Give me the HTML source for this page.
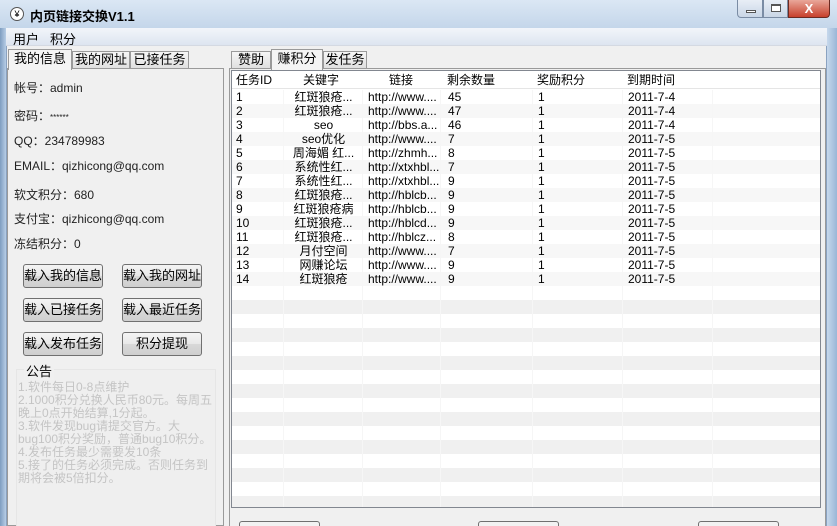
<!DOCTYPE html>
<html><head><meta charset="utf-8"><style>
*{margin:0;padding:0;box-sizing:border-box}
html,body{width:837px;height:526px;overflow:hidden}
body{background:#a9c4e0;font-family:"Liberation Sans","Noto Sans CJK SC",sans-serif;font-size:12px;color:#000;position:relative}
.abs{position:absolute}
#title{left:0;top:0;width:837px;height:28px;background:linear-gradient(#dbe7f4,#c4d6ea);}
#client{left:6px;top:28px;width:821px;height:498px;background:#f0f0f0;border-left:1px solid #8aa2c0;border-right:1px solid #8aa2c0}
#menu{left:6px;top:28px;width:821px;height:18px;background:linear-gradient(#f2f5fa,#dde5f0);border-bottom:1px solid #d4d9e2}
.tab{position:absolute;height:19px;border:1px solid #9a9a9a;border-bottom:none;background:linear-gradient(#f6f6f6,#e0e0e0);font-size:13px;line-height:17px;padding:0;text-align:center;white-space:nowrap;overflow:hidden}
.tab.sel{background:#f4f4f4;height:21px;z-index:2}
.panel{position:absolute;border:1px solid #9a9a9a;background:#f0f0f0}
.lbl{position:absolute;left:6px;font-size:12px;color:#222;white-space:nowrap}
.btn{position:absolute;width:80px;height:24px;border:1px solid #707070;border-radius:3px;background:linear-gradient(#f4f4f4 0%,#e8e8e8 50%,#d8d8d8 51%,#cfcfcf 100%);text-align:center;line-height:22px;font-size:13px;white-space:nowrap}
.row{position:absolute;left:0;width:589px;height:14px;font-size:12px;line-height:14px}
.row span{position:absolute;white-space:nowrap}
.vl{position:absolute;top:0;width:1px;background:#f6f6f6}
</style></head><body>
<div class="abs" id="title">
 <div class="abs" style="left:10px;top:7px;width:14px;height:14px;border-radius:50%;border:1px solid #555;background:#fff;font-size:9px;line-height:12px;text-align:center">¥</div>
 <div class="abs" style="left:30px;top:6px;font-weight:bold;font-size:13px">内页链接交换V1.1</div>
 <div class="abs" style="left:737px;top:0;width:26px;height:18px;border:1px solid #7a8ca4;border-top:none;border-radius:0 0 0 4px;background:linear-gradient(#e8eef6,#c9d6e6)"><div class="abs" style="left:8px;top:10px;width:10px;height:3px;background:#fff;border:1px solid #555"></div></div>
 <div class="abs" style="left:763px;top:0;width:25px;height:18px;border:1px solid #7a8ca4;border-top:none;background:linear-gradient(#e8eef6,#c9d6e6)"><div class="abs" style="left:7px;top:4px;width:10px;height:8px;border:1px solid #555;border-top-width:2px;background:#fff"></div></div>
 <div class="abs" style="left:788px;top:0;width:42px;height:18px;border:1px solid #6b2a22;border-top:none;border-radius:0 0 4px 0;background:linear-gradient(#e9a79a,#c7402c);color:#fff;font-weight:bold;text-align:center;line-height:17px;font-size:13px">X</div>
</div>
<div class="abs" id="client"></div>
<div class="abs" id="menu"><span class="abs" style="left:7px;top:1px;font-size:13px">用户</span><span class="abs" style="left:44px;top:1px;font-size:13px">积分</span></div>

<div class="tab sel" style="left:8px;top:49px;width:64px">我的信息</div>
<div class="tab" style="left:72px;top:51px;width:58px;height:17px;line-height:15px">我的网址</div>
<div class="tab" style="left:130px;top:51px;width:59px;height:17px;line-height:15px">已接任务</div>
<div class="panel" style="left:7px;top:68px;width:217px;height:458px">
 <div class="lbl" style="top:10px">帐号：admin</div>
 <div class="lbl" style="top:38px">密码：<span style="font-size:8px">******</span></div>
 <div class="lbl" style="top:63px">QQ：234789983</div>
 <div class="lbl" style="top:88px">EMAIL：qizhicong@qq.com</div>
 <div class="lbl" style="top:117px">软文积分：680</div>
 <div class="lbl" style="top:141px">支付宝：qizhicong@qq.com</div>
 <div class="lbl" style="top:166px">冻结积分：0</div>
 <div class="btn" style="left:15px;top:195px">载入我的信息</div>
 <div class="btn" style="left:114px;top:195px">载入我的网址</div>
 <div class="btn" style="left:15px;top:229px">载入已接任务</div>
 <div class="btn" style="left:114px;top:229px">载入最近任务</div>
 <div class="btn" style="left:15px;top:263px">载入发布任务</div>
 <div class="btn" style="left:114px;top:263px">积分提现</div>
 <div class="abs" style="left:8px;top:300px;width:200px;height:160px;border:1px solid #e6e6e6;background:#efefef"></div>
 <div class="abs" style="left:16px;top:292px;font-size:13px;background:#f0f0f0;padding:0 2px">公告</div>
 <div class="abs" style="left:10px;top:312px;width:200px;font-size:12px;line-height:13px;color:#c4c4c4">1.软件每日0-8点维护<br>2.1000积分兑换人民币80元。每周五晚上0点开始结算,1分起。<br>3.软件发现bug请提交官方。大bug100积分奖励，普通bug10积分。<br>4.发布任务最少需要发10条<br>5.接了的任务必须完成。否则任务到期将会被5倍扣分。</div>
</div>

<div class="tab" style="left:231px;top:51px;width:40px;height:17px;line-height:15px">赞助</div>
<div class="tab sel" style="left:271px;top:49px;width:52px">赚积分</div>
<div class="tab" style="left:323px;top:51px;width:44px;height:17px;line-height:15px">发任务</div>
<div class="panel" style="left:229px;top:68px;width:597px;height:458px"></div>
<div class="abs" style="left:231px;top:70px;width:590px;height:438px;background:#fff;border:1px solid #828790;overflow:hidden">
 <div class="abs" style="left:0;top:0;width:590px;height:18px;background:#fff;border-bottom:1px solid #e5e5e5"></div>
 <div class="row" style="top:2px;height:16px"><span style="left:4px">任务ID</span><span style="left:71px">关键字</span><span style="left:157px">链接</span><span style="left:215px">剩余数量</span><span style="left:305px">奖励积分</span><span style="left:395px">到期时间</span></div>
 <div id="rows"></div>
</div>
<div class="abs" style="left:230px;top:509px;width:595px;height:17px;background:#f0f0f0"></div>
<div class="abs" style="left:239px;top:521px;width:81px;height:10px;border:1px solid #707070;border-radius:3px;background:#f2f2f2"></div>
<div class="abs" style="left:478px;top:521px;width:81px;height:10px;border:1px solid #707070;border-radius:3px;background:#f2f2f2"></div>
<div class="abs" style="left:698px;top:521px;width:81px;height:10px;border:1px solid #707070;border-radius:3px;background:#f2f2f2"></div>
<script>
var d=[["1","红斑狼疮...","http://www....","45","1","2011-7-4"],["2","红斑狼疮...","http://www....","47","1","2011-7-4"],["3","seo","http://bbs.a...","46","1","2011-7-4"],["4","seo优化","http://www....","7","1","2011-7-5"],["5","周海媚 红...","http://zhmh...","8","1","2011-7-5"],["6","系统性红...","http://xtxhbl...","7","1","2011-7-5"],["7","系统性红...","http://xtxhbl...","9","1","2011-7-5"],["8","红斑狼疮...","http://hblcb...","9","1","2011-7-5"],["9","红斑狼疮病","http://hblcb...","9","1","2011-7-5"],["10","红斑狼疮...","http://hblcd...","9","1","2011-7-5"],["11","红斑狼疮...","http://hblcz...","8","1","2011-7-5"],["12","月付空间","http://www....","7","1","2011-7-5"],["13","网赚论坛","http://www....","9","1","2011-7-5"],["14","红斑狼疮","http://www....","9","1","2011-7-5"]];
var h="";
for(var i=0;i<30;i++){var t=19+i*14;var bg=i%2?"#f0f0f0":"#fff";if(i<14)bg=i%2?"#f7f7f7":"#fff";
h+='<div class="row" style="top:'+t+'px;background:'+bg+'">';
if(i<14){var r=d[i];h+='<span style="left:4px">'+r[0]+'</span><span style="left:52px;width:79px;text-align:center">'+r[1]+'</span><span style="left:136px">'+r[2]+'</span><span style="left:216px">'+r[3]+'</span><span style="left:306px">'+r[4]+'</span><span style="left:396px">'+r[5]+'</span>';}
h+='</div>';}
[51,130,208,300,390,480].forEach(function(x){h+='<div class="vl" style="left:'+x+'px;height:438px;top:19px"></div>';});
document.getElementById("rows").innerHTML=h;
</script>
<div class="abs" style="left:0;top:28px;width:6px;height:498px;background:linear-gradient(90deg,#7e9dc0,#b7cde6)"></div>
<div class="abs" style="left:827px;top:28px;width:10px;height:498px;background:linear-gradient(90deg,#c6d8ec,#9ab6d6)"></div>
</body></html>
